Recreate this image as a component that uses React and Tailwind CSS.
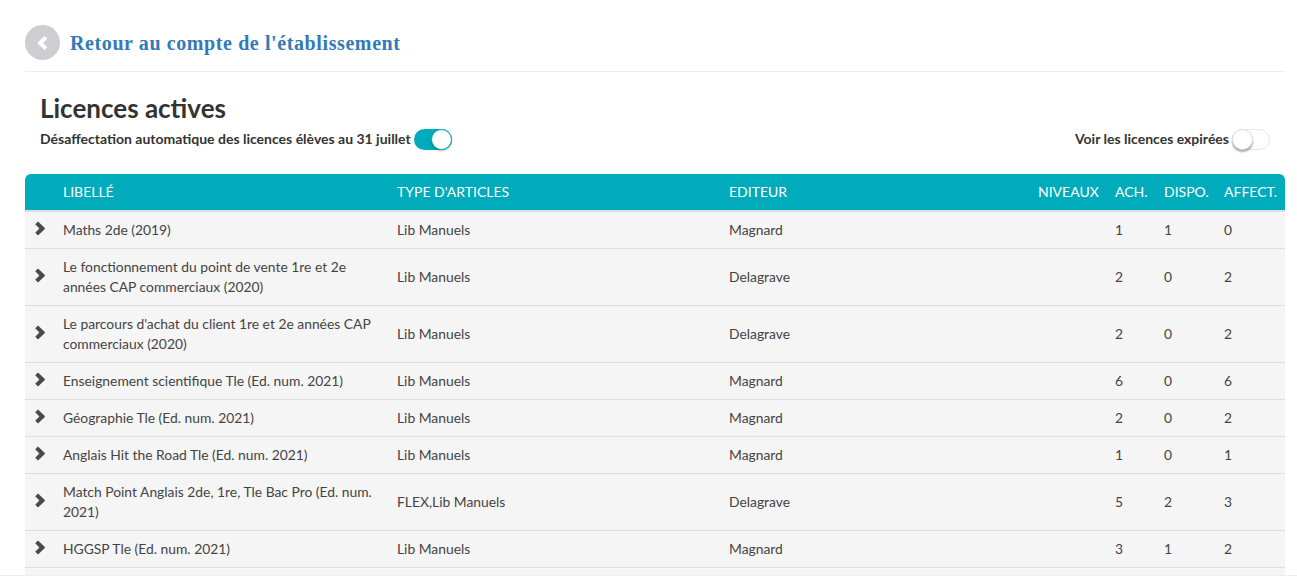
import React from "react";

const rows = [
  { name: "Maths 2de (2019)", type: "Lib Manuels", editor: "Magnard", ach: 1, dispo: 1, affect: 0 },
  { name: "Le fonctionnement du point de vente 1re et 2e années CAP commerciaux (2020)", type: "Lib Manuels", editor: "Delagrave", ach: 2, dispo: 0, affect: 2 },
  { name: "Le parcours d'achat du client 1re et 2e années CAP commerciaux (2020)", type: "Lib Manuels", editor: "Delagrave", ach: 2, dispo: 0, affect: 2 },
  { name: "Enseignement scientifique Tle (Ed. num. 2021)", type: "Lib Manuels", editor: "Magnard", ach: 6, dispo: 0, affect: 6 },
  { name: "Géographie Tle (Ed. num. 2021)", type: "Lib Manuels", editor: "Magnard", ach: 2, dispo: 0, affect: 2 },
  { name: "Anglais Hit the Road Tle (Ed. num. 2021)", type: "Lib Manuels", editor: "Magnard", ach: 1, dispo: 0, affect: 1 },
  { name: "Match Point Anglais 2de, 1re, Tle Bac Pro (Ed. num. 2021)", type: "FLEX,Lib Manuels", editor: "Delagrave", ach: 5, dispo: 2, affect: 3 },
  { name: "HGGSP Tle (Ed. num. 2021)", type: "Lib Manuels", editor: "Magnard", ach: 3, dispo: 1, affect: 2 },
];

const gridCols = "grid grid-cols-[38px_334px_332px_309px_77px_49px_60px_1fr] items-center";

const Chevron = ({ className }) => (
  <svg viewBox="0 0 10 14" className={className} fill="currentColor">
    <path d="M3 0 L9.6 6.2 Q10.2 7 9.6 7.8 L3 14 L0.2 11.2 L4.4 7 L0.2 2.8 Z" />
  </svg>
);

const Toggle = ({ on }) => (
  <div
    className={
      on
        ? "relative w-[38px] h-[21px] rounded-full bg-[#00acbb]"
        : "relative w-[38px] h-[21px] rounded-full bg-white border border-[#e5e5e5]"
    }
  >
    <div
      className={
        on
          ? "absolute right-0 top-0 w-[21px] h-[21px] rounded-full bg-white border border-[#00acbb] shadow-[0_1px_2px_rgba(0,0,0,0.3)]"
          : "absolute -left-px -top-px w-[21px] h-[21px] rounded-full bg-white border border-[#dddddd] shadow-[0_2px_2px_rgba(0,0,0,0.35)]"
      }
    />
  </div>
);

export default function App() {
  return (
    <div className="h-[576px] overflow-hidden bg-white pl-[25px] pr-3 border-b border-[#eeeeee] font-['Lato','Noto_Sans',sans-serif] text-[#333333]">
      <div className="flex items-center gap-[10px] h-[72px] pt-[15px] border-b border-[#eeeeee]">
        <div className="w-[35px] h-[35px] -mt-px rounded-full bg-[#cdcdd2] flex items-center justify-center text-white">
          <Chevron className="w-[11px] h-[14px] -scale-x-100" />
        </div>
        <a className="font-['Liberation_Serif',serif] font-bold text-[20px] tracking-[0.6px] text-[#337ab7]">
          Retour au compte de l'établissement
        </a>
      </div>

      <div className="px-[15px] pt-[21px]">
        <h1 className="text-[26px] leading-[30px] font-bold">Licences actives</h1>
        <div className="flex items-center justify-between mt-[6px] h-[21px]">
          <div className="flex items-center gap-[3px]">
            <span className="text-[14px] font-bold -mt-[2px]">Désaffectation automatique des licences élèves au 31 juillet</span>
            <Toggle on />
          </div>
          <div className="flex items-center gap-[3px]">
            <span className="text-[14px] font-bold -mt-[2px]">Voir les licences expirées</span>
            <Toggle />
          </div>
        </div>
      </div>

      <div className="mt-[24px] h-[402px] bg-[#f5f5f5]">
        <div className={`${gridCols} h-[38px] pb-[2px] text-[14px] rounded-t-[6px] bg-[#00acbb] text-white border-b-2 border-[#dddddd]`}>
          <span />
          <span>LIBELLÉ</span>
          <span>TYPE D'ARTICLES</span>
          <span>EDITEUR</span>
          <span>NIVEAUX</span>
          <span>ACH.</span>
          <span>DISPO.</span>
          <span>AFFECT.</span>
        </div>
        {rows.map((row) => (
          <div key={row.name} className={`${gridCols} py-[8px] text-[13.85px] leading-[20px] border-b border-[#dddddd] text-[#444444]`}>
            <Chevron className="w-[10px] h-[15px] ml-[10px] -mt-[3px] text-[#4a4a4a]" />
            <span className="pr-[20px]">{row.name}</span>
            <span>{row.type}</span>
            <span>{row.editor}</span>
            <span />
            <span>{row.ach}</span>
            <span>{row.dispo}</span>
            <span>{row.affect}</span>
          </div>
        ))}
      </div>
    </div>
  );
}
